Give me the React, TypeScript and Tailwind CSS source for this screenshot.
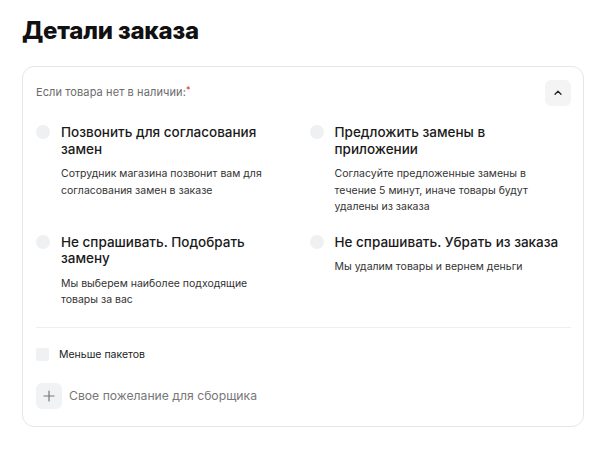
import React from "react";

const options = [
  {
    title: "Позвонить для согласования замен",
    desc: "Сотрудник магазина позвонит вам для согласования замен в заказе",
  },
  {
    title: "Предложить замены в приложении",
    desc: "Согласуйте предложенные замены в течение 5 минут, иначе товары будут удалены из заказа",
  },
  {
    title: "Не спрашивать. Подобрать замену",
    desc: "Мы выберем наиболее подходящие товары за вас",
  },
  {
    title: "Не спрашивать. Убрать из заказа",
    desc: "Мы удалим товары и вернем деньги",
  },
];

export default function App() {
  return (
    <div
      className="w-[607px] h-[462px] bg-white px-[22px] pt-[15px] text-[#1a1a1a]"
      style={{ fontFamily: "Inter, 'Noto Sans', sans-serif" }}
    >
      <h1 className="text-[24px] leading-[32px] font-extrabold tracking-[-0.2px] text-[#111]">Детали заказа</h1>
      <div className="mt-[19px] w-[562px] rounded-[12px] border border-[#e6e6e6] pl-[13px] pr-[12px] pt-[13px] pb-[17px]">
        <div className="flex items-start justify-between">
          <div className="pt-[5px] text-[11px] leading-[14px] tracking-[0.1px] text-[#6b6b6b]">
            Если товара нет в наличии:<span className="text-[#e0202e] align-top text-[9px] leading-[10px]">*</span>
          </div>
          <button className="flex h-[26px] w-[26px] items-center justify-center rounded-[6px] bg-[#f4f4f5]">
            <svg width="12" height="12" viewBox="0 0 12 12" fill="none">
              <path d="M3 7.3L6 4.3L9 7.3" stroke="#222" strokeWidth="1.3" strokeLinecap="round" strokeLinejoin="round" />
            </svg>
          </button>
        </div>
        <div className="mt-[18px] grid grid-cols-2 gap-x-[12px] gap-y-[18px]">
          {options.map((o) => (
            <div key={o.title} className="flex gap-[11px]">
              <div className="mt-[1px] h-[14px] w-[14px] shrink-0 rounded-full bg-[#eef0f2]" />
              <div className="pr-[10px]">
                <div className="text-[13.5px] leading-[16.5px] font-medium text-[#1a1a1a]">{o.title}</div>
                <div className="mt-[9px] max-w-[212px] text-[10.5px] leading-[16.5px] text-[#333]">{o.desc}</div>
              </div>
            </div>
          ))}
        </div>
        <div className="mt-[18px] h-px bg-[#eeeeee]" />
        <div className="mt-[20px] flex items-center gap-[10px]">
          <div className="h-[13px] w-[13px] rounded-[2px] bg-[#f0f1f3]" />
          <span className="text-[10.5px] leading-[14px] text-[#222]">Меньше пакетов</span>
        </div>
        <div className="mt-[21px] flex items-center gap-[7px]">
          <button className="flex h-[26px] w-[26px] items-center justify-center rounded-[6px] bg-[#f1f2f4]">
            <svg width="12" height="12" viewBox="0 0 12 12" fill="none">
              <path d="M6 1V11M1 6H11" stroke="#777" strokeWidth="1.2" strokeLinecap="round" />
            </svg>
          </button>
          <span className="text-[12.2px] leading-[16px] text-[#777]">Свое пожелание для сборщика</span>
        </div>
      </div>
    </div>
  );
}
